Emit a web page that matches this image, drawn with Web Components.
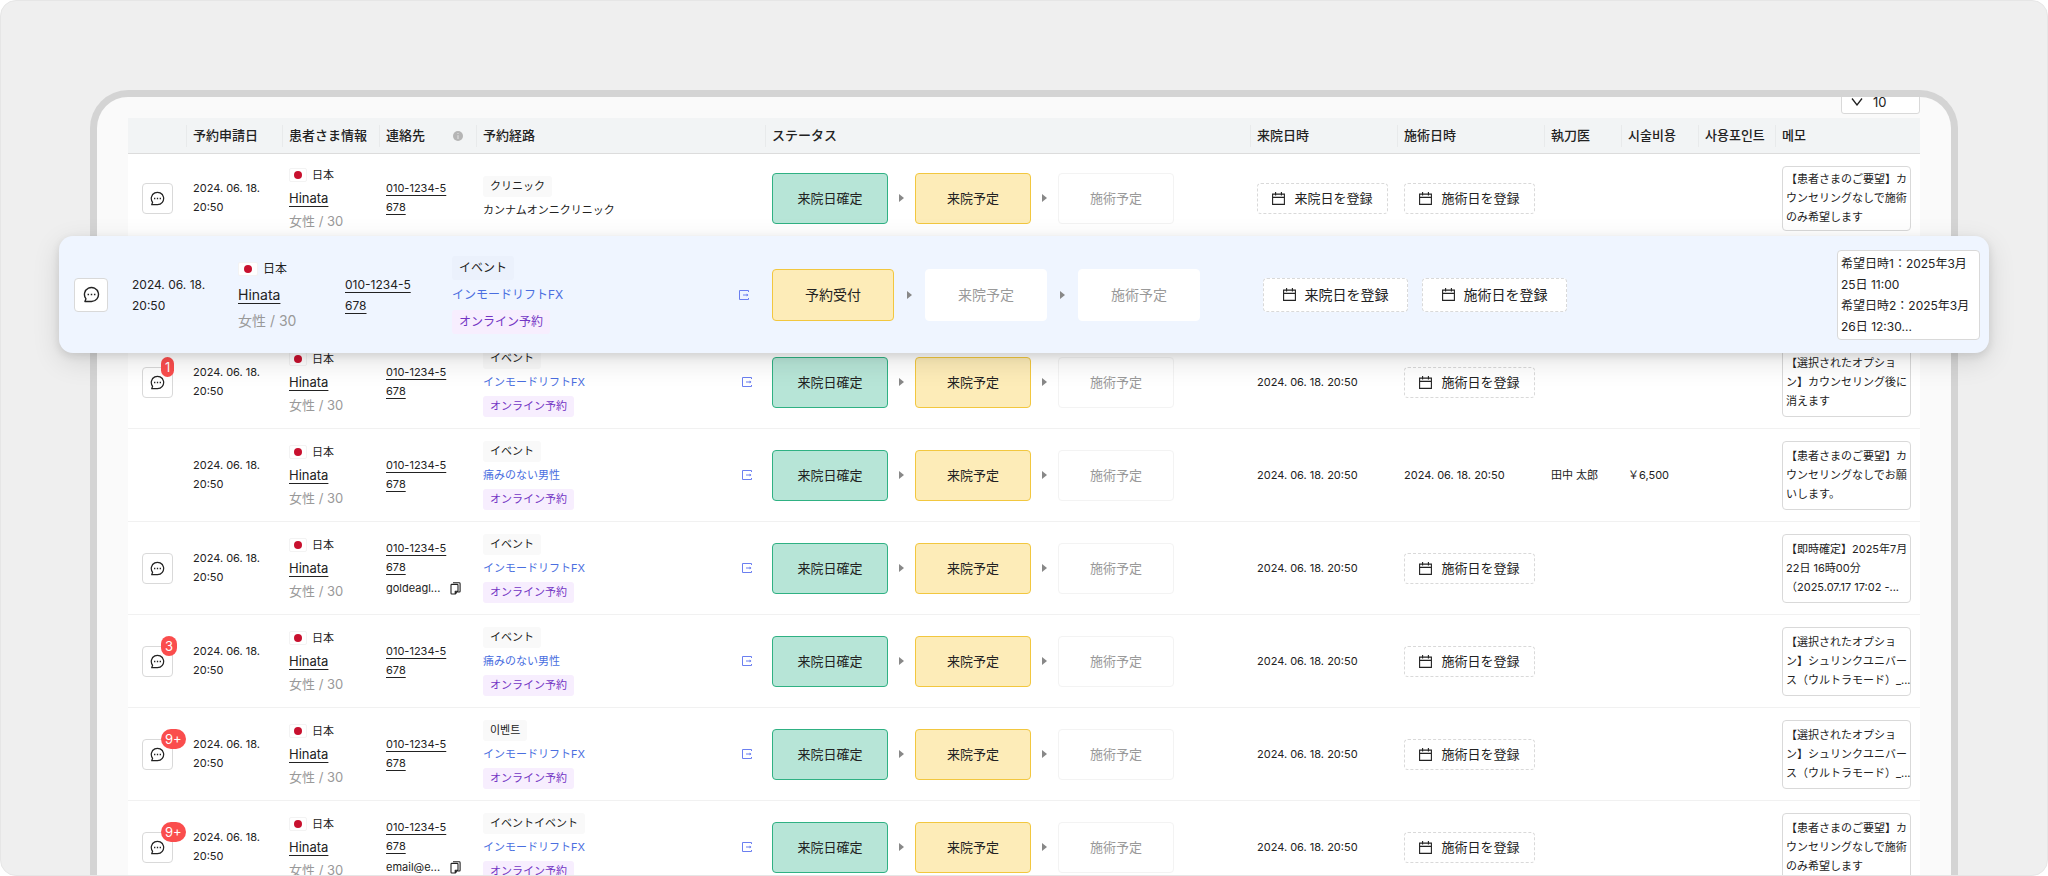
<!DOCTYPE html>
<html lang="ja">
<head>
<meta charset="utf-8">
<title>予約管理</title>
<style>
  body {
    margin: 0;
    background: #fff;
    color: #222;
    font-family: Inter, "Noto Sans CJK JP", "Noto Sans CJK KR", sans-serif;
  }
</style>
</head>
<body>
<booking-stage>
  <device-frame>
    <page-size value="10"></page-size>
    <booking-table></booking-table>
  </device-frame>
  <booking-highlight slot="highlight"></booking-highlight>
</booking-stage>

<script>
(function () {
  const DATE = "2024. 06. 18.";
  const TIME = "20:50";
  const EVENT = "イベント";
  const FX = "インモードリフトFX";
  const MALE = "痛みのない男性";
  const OPTION = "【選択されたオプション】シュリンクユニバース（ウルトラモード）_...";
  const WISH = "【患者さまのご要望】カウンセリングなしで施術のみ希望します";

  const columns = [
    { name: "", width: 58 },
    { name: "予約申請日", width: 96 },
    { name: "患者さま情報", width: 97 },
    { name: "連絡先", width: 97, info: true },
    { name: "予約経路", width: 289 },
    { name: "ステータス" },
    { name: "来院日時", width: 147 },
    { name: "施術日時", width: 147 },
    { name: "執刀医", width: 77 },
    { name: "시술비용", width: 77, lang: "ko" },
    { name: "사용포인트", width: 77, lang: "ko" },
    { name: "메모", width: 145, lang: "ko" },
  ];

  const bookings = [
    { count: "", tag: "クリニック", clinic: "カンナムオンニクリニック", memo: WISH, first: true },
    { hidden: true },
    { count: "1", tag: EVENT, link: FX, visit: true, memo: "【選択されたオプション】カウンセリング後に消えます" },
    { noMessage: true, tag: EVENT, link: MALE, visit: true, surgery: true, doctor: "田中 太郎", cost: "￥6,500", memo: "【患者さまのご要望】カウンセリングなしでお願いします。" },
    { count: "", tag: EVENT, link: FX, visit: true, email: "goldeagl...", memo: "【即時確定】2025年7月22日 16時00分（2025.07.17 17:02 -..." },
    { count: "3", tag: EVENT, link: MALE, visit: true, memo: OPTION },
    { count: "9+", tag: "이벤트", link: FX, visit: true, memo: OPTION },
    { count: "9+", tag: "イベントイベント", link: FX, visit: true, email: "email@e...", memo: WISH },
  ];

  class BaseElement extends HTMLElement {
    connectedCallback() {
      if (!this.shadowRoot) {
        this.attachShadow({ mode: "open" });
      }
      this.render();
    }
    attr(name) {
      return this.getAttribute(name) || "";
    }
  }

  class BookingStage extends BaseElement {
    render() {
      this.shadowRoot.innerHTML = `
    <style>
      :host {
        display: block;
        position: relative;
        box-sizing: border-box;
        height: 100vh;
        overflow: hidden;
        padding: 89px 89px 0;
        border: 1px solid #e6e6e6;
        border-radius: 16px;
        background: #efefef;
      }
      .highlight {
        position: absolute;
        left: 58px;
        right: 58px;
        top: 235px;
      }
    </style>
    <slot></slot>
    <div class="highlight"><slot name="highlight"></slot></div>
    `;
    }
  }

  class DeviceFrame extends BaseElement {
    render() {
      this.shadowRoot.innerHTML = `
    <style>
      :host {
        display: block;
        overflow: hidden;
        padding: 0 31px;
        border: 7px solid #d4d4d4;
        border-bottom: 0;
        border-radius: 38px 38px 0 0;
        background: #fafafa;
      }
    </style>
    <slot></slot>
    `;
    }
  }

  class PageSize extends BaseElement {
    render() {
      this.shadowRoot.innerHTML = `
    <style>
      :host {
        display: flex;
        justify-content: flex-end;
        align-items: flex-end;
        height: 17px;
        padding-bottom: 4px;
      }
      label {
        display: flex;
        align-items: center;
        gap: 10px;
        box-sizing: border-box;
        width: 79px;
        height: 24px;
        padding: 0 9px;
        border: 1px solid #d9d9d9;
        border-radius: 3px;
        background: #fff;
      }
      svg { flex: none; }
      select {
        appearance: none;
        flex: 1;
        min-width: 0;
        padding: 0;
        border: 0;
        background: none;
        color: #222;
        font: 13px/22px Inter, sans-serif;
      }
    </style>
    <label aria-label="表示件数">
      <svg width="12" height="8" viewBox="0 0 12 8" fill="none" stroke="#222" stroke-width="1.3"><path d="M1 .5 6 7 11 .5"/></svg>
      <select><option>${this.attr("value")}</option></select>
    </label>
    `;
    }
  }

  // round speech bubble button with the unread counter
  class MessageButton extends BaseElement {
    render() {
      const count = this.attr("count");
      this.shadowRoot.innerHTML = `
    <style>
      :host { display: block; }
      button {
        position: relative;
        display: flex;
        align-items: center;
        justify-content: center;
        box-sizing: border-box;
        width: var(--message-size, 31px);
        height: var(--message-size, 31px);
        padding: 0;
        border: 1px solid #d9d9d9;
        border-radius: 4px;
        background: #fff;
      }
      svg { width: var(--message-icon, 15px); height: var(--message-icon, 15px); }
      span {
        position: absolute;
        left: 18px;
        top: -11px;
        padding: 0 4px;
        border-radius: 10px;
        background: #fa4d4d;
        color: #fff;
        font: 13px/20px Inter, sans-serif;
      }
    </style>
    <button aria-label="メッセージ">
      <svg viewBox="0 0 16 16" fill="none" stroke="#222" stroke-width="1.3">
        <path d="M8 14.6H1.8l1-2.5A6.6 6.6 0 1 1 8 14.6Z" stroke-linejoin="round"/>
        <path d="M4.3 8h1.4M7.3 8h1.4M10.3 8h1.4" stroke-width="1.5"/>
      </svg>
      ${count ? `<span>${count}</span>` : ""}
    </button>
    `;
    }
  }

  class PatientInfo extends BaseElement {
    render() {
      this.shadowRoot.innerHTML = `
    <style>
      :host {
        display: block;
        font-size: var(--name-size, 13px);
        line-height: var(--name-line, 23px);
        white-space: nowrap;
      }
      .country {
        display: flex;
        align-items: center;
        gap: 5px;
        font-size: var(--text-size, 11px);
      }
      i {
        display: flex;
        align-items: center;
        justify-content: center;
        box-sizing: border-box;
        width: var(--flag-width, 18px);
        height: 14px;
        border: 1px solid #f3f3f3;
        border-radius: 2px;
        background: #fff;
      }
      i::before {
        content: "";
        width: 8px;
        height: 8px;
        border-radius: 50%;
        background: #c8102e;
      }
      a { color: #222; text-underline-offset: 3px; }
      .sex { color: #999; }
    </style>
    <div class="country"><i></i>日本</div>
    <div><a href="#">Hinata</a></div>
    <div class="sex">女性 / 30</div>
    `;
    }
  }

  class ContactInfo extends BaseElement {
    render() {
      const email = this.attr("email");
      this.shadowRoot.innerHTML = `
    <style>
      :host { display: block; }
      a { color: #222; text-underline-offset: 3px; }
      .email {
        display: flex;
        align-items: center;
        justify-content: space-between;
        padding: 2px 6px 0 0;
      }
      button { display: flex; padding: 0; border: 0; background: none; }
    </style>
    <a href="#">010-1234-5<br>678</a>
    ${email ? `<div class="email">${email}
      <button aria-label="コピー">
        <svg width="11" height="13" viewBox="0 0 11 13" fill="none" stroke="#222" stroke-width="1.1" stroke-linejoin="round">
          <path d="M1 3.2q0-.8.8-.8h5.4q.8 0 .8.8v6L5.2 12H1.8q-.8 0-.8-.8ZM8 9.2H5.2V12"/><path d="M3 .8h6.2q.9 0 .9.9v7.6q0 .7-.7.7H8"/>
        </svg>
      </button></div>` : ""}
    `;
    }
  }

  class BookingRoute extends BaseElement {
    render() {
      const link = this.attr("link");
      const clinic = this.attr("clinic");
      this.shadowRoot.innerHTML = `
    <style>
      :host {
        display: flex;
        flex-direction: column;
        align-items: flex-start;
        gap: 3px;
        font-size: var(--text-size, 11px);
        line-height: var(--tag-line, 21px);
      }
      .tag { padding: 0 7px; border-radius: 3px; background: var(--tag-bg, #f9f9f9); }
      .online { background: #f7eefe; color: #7335c4; }
      .event {
        display: flex;
        align-items: center;
        justify-content: space-between;
        align-self: stretch;
        padding-right: var(--route-end, 4px);
      }
      a { color: #4a6ee0; text-decoration: none; }
      button { display: flex; padding: 0; border: 0; background: none; }
    </style>
    <span class="tag">${this.attr("tag")}</span>
    ${clinic ? `<span>${clinic}</span>` : ""}
    ${link ? `
    <div class="event"><a href="#">${link}</a>
      <button aria-label="開く">
        <svg width="10" height="10" viewBox="0 0 10 10" fill="none" stroke="#6b7ff0"><path d="M9.5 2V.5h-9v9h9V8M4 5h5"/><path d="M7.6 3.6 9.4 5 7.6 6.4Z" fill="#6b7ff0" stroke="none"/></svg>
      </button></div>
    <span class="tag online">オンライン予約</span>` : ""}
    `;
    }
  }

  class StatusFlow extends BaseElement {
    render() {
      const arrow = `<svg width="5" height="8" viewBox="0 0 5 8"><path d="M0 0 5 4 0 8Z" fill="#888"/></svg>`;
      this.shadowRoot.innerHTML = `
    <style>
      :host { display: flex; align-items: center; gap: var(--flow-gap, 11px); }
      ::slotted(status-step) { flex: none; }
      svg { flex: none; }
    </style>
    <slot name="1"></slot>${arrow}<slot name="2"></slot>${arrow}<slot name="3"></slot>
    `;
    }
  }

  class StatusStep extends BaseElement {
    render() {
      this.shadowRoot.innerHTML = `
    <style>
      :host { display: block; }
      button {
        display: block;
        box-sizing: border-box;
        width: var(--step-width, 116px);
        height: var(--step-height, 51px);
        padding: 0;
        border: 1px solid var(--step-border, #f3f3f3);
        border-radius: 4px;
        background: #fff;
        color: #999;
        font: inherit;
        font-size: var(--name-size, 13px);
      }
      :host([kind="done"]) button { background: #b7e5d7; border-color: #2fb183; color: #222; }
      :host([kind="now"]) button { background: #fdecb8; border-color: #f2c73f; color: #222; }
    </style>
    <button><slot></slot></button>
    `;
    }
  }

  class DateButton extends BaseElement {
    render() {
      this.shadowRoot.innerHTML = `
    <style>
      :host { display: block; }
      button {
        display: flex;
        align-items: center;
        justify-content: center;
        gap: 9px;
        box-sizing: border-box;
        width: 100%;
        height: var(--message-size, 31px);
        padding: 0;
        border: 1px dashed #d9d9d9;
        border-radius: 4px;
        background: #fff;
        color: #222;
        font: inherit;
        font-size: var(--name-size, 13px);
        white-space: nowrap;
      }
    </style>
    <button>
      <svg width="13" height="13" viewBox="0 0 13 13" fill="none" stroke="#222" stroke-width="1.1"><path d="M.6 2.1h11.8v10.3H.6ZM.6 5.4h11.8M3.6 0v3.6M9.4 0v3.6"/></svg>
      <slot></slot>
    </button>
    `;
    }
  }

  class MemoBox extends BaseElement {
    render() {
      this.shadowRoot.innerHTML = `
    <style>
      :host {
        display: flex;
        align-items: center;
        box-sizing: border-box;
        min-height: var(--memo-height, 69px);
        padding-left: 3px;
        border: 1px solid #d9d9d9;
        border-radius: 4px;
        background: #fff;
      }
      div { flex: 1; margin-right: -1px; }
    </style>
    <div><slot></slot></div>
    `;
    }
  }

  class BookingTable extends BaseElement {
    row(b) {
      if (b.hidden) {
        return `<tr class="hidden"><td colspan="12"></td></tr>`;
      }
      return `
      <tr class="${b.first ? "first" : ""}">
        <td class="message">${b.noMessage ? "" : `<message-button count="${b.count}"></message-button>`}</td>
        <td>${DATE}<br>${TIME}</td>
        <td><patient-info></patient-info></td>
        <td><contact-info email="${b.email || ""}"></contact-info></td>
        <td><booking-route tag="${b.tag}" link="${b.link || ""}" clinic="${b.clinic || ""}"></booking-route></td>
        <td>
          <status-flow>
            <status-step slot="1" kind="done">来院日確定</status-step>
            <status-step slot="2" kind="now">来院予定</status-step>
            <status-step slot="3">施術予定</status-step>
          </status-flow>
        </td>
        <td>${b.visit ? `${DATE} ${TIME}` : `<date-button>来院日を登録</date-button>`}</td>
        <td>${b.surgery ? `${DATE} ${TIME}` : `<date-button>施術日を登録</date-button>`}</td>
        <td>${b.doctor || ""}</td>
        <td>${b.cost || ""}</td>
        <td></td>
        <td><memo-box>${b.memo}</memo-box></td>
      </tr>`;
    }
    render() {
      this.shadowRoot.innerHTML = `
    <style>
      :host { display: block; }
      table {
        width: 100%;
        table-layout: fixed;
        border-collapse: separate;
        border-spacing: 0;
        background: #fff;
        font-size: 11px;
        line-height: 19px;
      }
      th, td { box-sizing: border-box; padding: 0 9px 0 7px; text-align: left; vertical-align: middle; }
      th {
        height: 36px;
        padding: 0;
        border-bottom: 1px solid #dcdcdc;
        background: #f2f4f5;
        font-size: 13px;
        font-weight: 500;
        white-space: nowrap;
      }
      th div {
        display: flex;
        align-items: center;
        justify-content: space-between;
        height: 22px;
        padding: 0 13px 0 6px;
        border-left: 1px solid #e8eaeb;
      }
      th:first-child div { border: 0; }
      th span { width: 0; }
      td { height: 93px; border-bottom: 1px solid #f1f1f1; }
      .message { padding-left: 14px; }
      .first td { height: 89px; }
      .first { --memo-height: 65px; }
    </style>
    <table>
      <colgroup>${columns.map((c) => `<col${c.width ? ` style="width:${c.width}px"` : ""}>`).join("")}</colgroup>
      <thead><tr>${columns
        .map((c) => `<th${c.lang ? ` lang="${c.lang}"` : ""}><div><span>${c.name}</span>${
          c.info
            ? `<svg width="10" height="10" viewBox="0 0 10 10"><circle cx="5" cy="5" r="5" fill="#b5b5b5"/><path d="M5 2v1M5 4.2V8" stroke="#e4e4e4"/></svg>`
            : ""
        }</div></th>`)
        .join("")}</tr></thead>
      <tbody>${bookings.map((b) => this.row(b)).join("")}</tbody>
    </table>
    `;
    }
  }

  // the row lifted above the table, drawn a little larger
  class BookingHighlight extends BaseElement {
    render() {
      this.shadowRoot.innerHTML = `
    <style>
      :host {
        --message-size: 34px;
        --message-icon: 17px;
        --name-size: 14px;
        --name-line: 26px;
        --flag-width: 20px;
        --text-size: 12px;
        --tag-line: 24px;
        --tag-bg: #ebf1fc;
        --step-width: 122px;
        --step-height: 52px;
        --step-border: #fff;
        --flow-gap: 13px;
        --memo-height: 90px;
        --route-end: 23px;
        display: grid;
        grid-template-columns: 58px 106px 107px 107px 320px 1fr 145px 14px 145px 270px 143px;
        align-items: center;
        box-sizing: border-box;
        height: 117px;
        padding: 0 9px 0 15px;
        border-radius: 14px;
        background: #eff5ff;
        box-shadow: 0 3px 8px rgba(0, 0, 0, .1), 0 8px 28px rgba(0, 0, 0, .12);
        font-size: 12px;
        line-height: 21px;
      }
      .surgery { grid-column: 9; }
      memo-box { grid-column: 11; }
    </style>
    <message-button></message-button>
    <div>${DATE}<br>${TIME}</div>
    <patient-info></patient-info>
    <contact-info></contact-info>
    <booking-route tag="${EVENT}" link="${FX}"></booking-route>
    <status-flow>
      <status-step slot="1" kind="now">予約受付</status-step>
      <status-step slot="2">来院予定</status-step>
      <status-step slot="3">施術予定</status-step>
    </status-flow>
    <date-button>来院日を登録</date-button>
    <date-button class="surgery">施術日を登録</date-button>
    <memo-box>希望日時1：2025年3月25日 11:00<br>希望日時2：2025年3月26日 12:30...</memo-box>
    `;
    }
  }

  window.customElements.define("booking-stage", BookingStage);
  window.customElements.define("device-frame", DeviceFrame);
  window.customElements.define("page-size", PageSize);
  window.customElements.define("message-button", MessageButton);
  window.customElements.define("patient-info", PatientInfo);
  window.customElements.define("contact-info", ContactInfo);
  window.customElements.define("booking-route", BookingRoute);
  window.customElements.define("status-flow", StatusFlow);
  window.customElements.define("status-step", StatusStep);
  window.customElements.define("date-button", DateButton);
  window.customElements.define("memo-box", MemoBox);
  window.customElements.define("booking-table", BookingTable);
  window.customElements.define("booking-highlight", BookingHighlight);
})();
</script>
</body>
</html>
